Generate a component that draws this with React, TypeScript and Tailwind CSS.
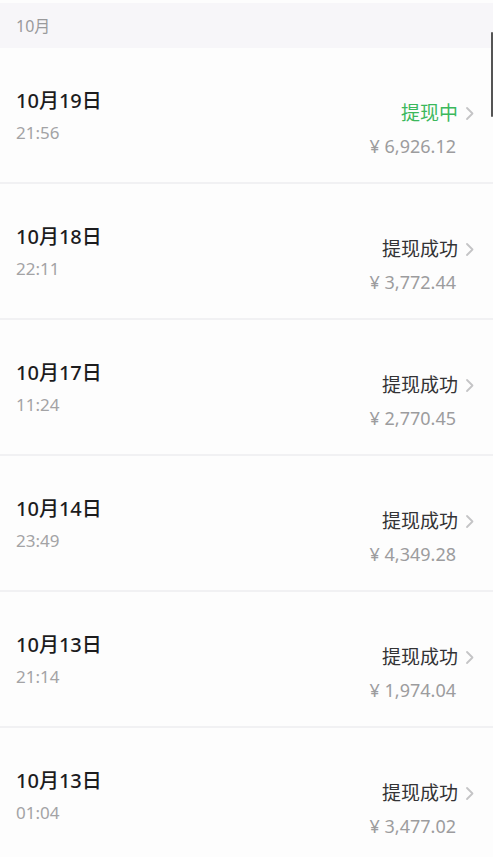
const records = [
    { date: "10月19日", time: "21:56", status: "提现中", amount: "¥ 6,926.12", pending: true },
    { date: "10月18日", time: "22:11", status: "提现成功", amount: "¥ 3,772.44" },
    { date: "10月17日", time: "11:24", status: "提现成功", amount: "¥ 2,770.45" },
    { date: "10月14日", time: "23:49", status: "提现成功", amount: "¥ 4,349.28" },
    { date: "10月13日", time: "21:14", status: "提现成功", amount: "¥ 1,974.04" },
    { date: "10月13日", time: "01:04", status: "提现成功", amount: "¥ 3,477.02" },
];

function Chevron() {
    return (
        <svg width="11" height="15" viewBox="0 0 11 15" fill="none">
            <path
                d="M3 2l5.5 5.5L3 13"
                stroke="#c4c4c6"
                strokeWidth="1.8"
                strokeLinecap="round"
                strokeLinejoin="round"
            />
        </svg>
    );
}

export default function App() {
    return (
        <div
            className="relative h-[857px] w-[493px] overflow-hidden bg-[#fdfdfd] pt-[3px]"
            style={{ fontFamily: '"Noto Sans", "Noto Sans CJK SC", sans-serif' }}
        >
            <div className="flex h-[45px] items-center bg-[#f7f6f9] px-4 text-[16px] text-[#9a9a9c]">
                10月
            </div>

            {records.map((r, i) => (
                <div
                    key={i}
                    className="flex h-[136px] justify-between border-b-2 border-[#f1f1f3] pl-4 pr-[18px]"
                >
                    <div className="flex flex-col gap-[6px] pt-[39px]">
                        <div className="text-[20px] font-medium leading-[28px] text-[#1c1c1e]">
                            {r.date}
                        </div>
                        <div className="text-[17px] leading-[24px] text-[#a3a3a5]">
                            {r.time}
                        </div>
                    </div>
                    <div className="flex flex-col items-end gap-[8px] pt-[52px]">
                        <div className="flex items-center gap-[6px]">
                            <span
                                className={
                                    r.pending
                                        ? "text-[19px] leading-[26px] text-[#3bb85c]"
                                        : "text-[19px] leading-[26px] text-[#333335]"
                                }
                            >
                                {r.status}
                            </span>
                            <Chevron />
                        </div>
                        <div className="mr-[19px] text-[18px] leading-[24px] text-[#9c9c9e]">
                            {r.amount}
                        </div>
                    </div>
                </div>
            ))}

            <div className="absolute right-0 top-[32px] h-[85px] w-[2px] rounded-full bg-[#555]" />
        </div>
    );
}
